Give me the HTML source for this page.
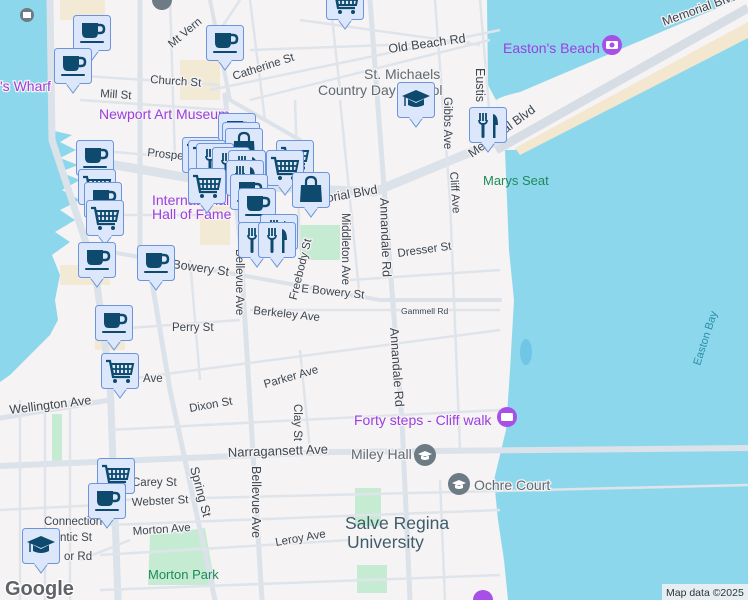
<!DOCTYPE html>
<html><head><meta charset="utf-8"><style>
html,body{margin:0;padding:0;width:748px;height:600px;overflow:hidden;background:#f5f3f4}
svg{display:block}
text{font-family:"Liberation Sans",sans-serif}
.s{font-size:11.5px;fill:#3c4650;stroke:#f5f3f4;stroke-width:2.5px;paint-order:stroke}
.p{font-size:14px;fill:#9a3fe0;stroke:#f5f3f4;stroke-width:2.5px;paint-order:stroke}
.g{font-size:14px;fill:#5f6a73;stroke:#f5f3f4;stroke-width:2.5px;paint-order:stroke}
</style></head><body>
<svg width="748" height="600" viewBox="0 0 748 600" xmlns="http://www.w3.org/2000/svg">
<defs>
<g id="box"><rect x="0.5" y="0.5" width="37" height="35" rx="3" fill="#dde7fb" stroke="#6b94da"/><path d="M12 35.5 L19 45 L26 35.5" fill="#dde7fb" stroke="#6b94da"/><rect x="12.5" y="34" width="13" height="3" fill="#dde7fb"/></g>
<g id="cup"><use href="#box"/><path d="M9 8 H25 V18 Q25 23 20 23 H14 Q9 23 9 18 Z" fill="#0d4a6e"/><path d="M25 10 H27 Q31 10 31 14 Q31 18 27 18 H25" fill="none" stroke="#0d4a6e" stroke-width="2.5"/><rect x="7" y="26" width="24" height="2" rx="1" fill="#0d4a6e"/></g>
<g id="cart"><use href="#box"/><path d="M5 8 H9 L12 24 H29" fill="none" stroke="#0d4a6e" stroke-width="2.2"/><path d="M10 11 H32 L30 21 H12 Z" fill="none" stroke="#0d4a6e" stroke-width="2"/><path d="M15 11V21M19 11V21M23 11V21M27 11V21M11 16H31" stroke="#0d4a6e" stroke-width="1.8"/><circle cx="14" cy="28" r="2" fill="#0d4a6e"/><circle cx="27" cy="28" r="2" fill="#0d4a6e"/></g>
<g id="bag"><use href="#box"/><path d="M9 13 H29 L30 30 H8 Z" fill="#0d4a6e"/><path d="M14 14 V10 Q14 5 19 5 Q24 5 24 10 V14" fill="none" stroke="#0d4a6e" stroke-width="2.2"/></g>
<g id="fork"><use href="#box"/><path d="M11 6V14M14 6V14M17 6V14M10 13Q10 17 14 17Q18 17 18 13" fill="none" stroke="#0d4a6e" stroke-width="1.8"/><rect x="12.5" y="16" width="3" height="15" rx="1.2" fill="#0d4a6e"/><path d="M24 31V7Q29 8 29 18H26.5V31Z" fill="#0d4a6e"/></g>
<g id="grad"><use href="#box"/><path d="M5 14 L19 8 L33 14 L19 20 Z" fill="#0d4a6e"/><path d="M11 17V23Q19 27 27 23V17L19 21Z" fill="#0d4a6e"/><path d="M8 15V24" stroke="#0d4a6e" stroke-width="1.5"/></g>
</defs>

<path d="M0 0 H50 V130 L72 135 L60 142 L76 150 L60 158 L78 165 L60 172 L80 180 L62 190 L80 200 L60 210 L75 220 L55 232 L70 242 L52 255 L60 275 L55 300 L58 320 L50 335 L30 355 L10 375 L0 382 Z" fill="#8dd7ec"/>
<path d="M487 0 H748 V600 H508 L504 560 L498 520 L494 480 L506 430 L510 370 L514 300 L509 250 L505 150 L496 100 L488 85 Z" fill="#8dd7ec"/>
<path d="M496 100 Q502 96 520 92 L748 -5 V35 L515 150 L505 150 Z" fill="#f5f3f4"/>
<path d="M515 148 L748 22 V38 L520 155 Z" fill="#f3e7cf"/>
<path d="M496 150 L748 8" stroke="#d6dde4" stroke-width="9"/>
<ellipse cx="526" cy="352" rx="6" ry="13" fill="#6fc6e6"/>

<g fill="#c5ecd3">
<rect x="300" y="225" width="40" height="35"/>
<rect x="355" y="488" width="26" height="38"/>
<rect x="357" y="565" width="30" height="28"/>
<polygon points="150,535 205,528 215,585 148,585"/>
<rect x="52" y="414" width="10" height="48"/>
</g>
<g fill="#f3ead6">
<rect x="60" y="0" width="45" height="20"/><rect x="180" y="60" width="40" height="40"/><rect x="200" y="205" width="30" height="40"/><rect x="60" y="265" width="50" height="20"/><rect x="95" y="330" width="30" height="20"/>
</g>

<g fill="none" stroke="#dce2e9" stroke-linecap="round">
<path d="M115 165 L230 185 L374 192 L500 140" stroke-width="9"/>
<path d="M50 0 L52 140 L95 270 L110 380 L118 600" stroke-width="7"/>
<path d="M0 466 L330 452 L748 448" stroke-width="6"/>
<path d="M225 95 L240 240 L262 600" stroke-width="5"/>
<path d="M150 270 L170 390 L215 600" stroke-width="5"/>
<path d="M370 0 L385 200 L395 330 L402 420 L410 600" stroke-width="5"/>
<path d="M0 418 L110 400" stroke-width="5"/>
<path d="M140 0 L140 260" stroke-width="5"/>
<path d="M100 250 L380 300 L500 300" stroke-width="4"/>
<path d="M210 0 L230 100 L300 140" stroke-width="4"/>
</g>
<g fill="none" stroke="#dfe4ea" stroke-width="2.5">
<path d="M70 75 L220 85 M80 100 L225 110 M90 150 L210 160 M100 215 L200 215 M210 90 L500 30 M250 100 L490 40 M300 20 L480 45 M250 50 L470 42 M350 280 L500 270 M250 310 L500 310 M100 330 L240 320 M120 380 L500 330 M110 430 L300 420 L500 410 M0 510 L100 505 M120 500 L748 485 M110 525 L500 510 M100 555 L350 540 M100 590 L500 575 M20 400 L20 600 M45 410 L45 600 M70 400 L70 600 M295 100 L300 250 M340 100 L360 300 M435 0 L450 200 L460 450 M300 350 L310 450 M480 0 L490 120 M170 0 L175 160 M250 0 L265 120 M330 0 L340 90 M190 260 L200 380 M440 480 L445 600 M240 0 L220 30 M80 560 L130 540"/>
</g>

<text class="s" x="161" y="42" transform="rotate(-40 175 30)">Mt Vern</text>
<text class="s" x="150" y="83" transform="rotate(4 150 83)">Church St</text>
<text class="s" x="234" y="80" transform="rotate(-18 234 80)">Catherine St</text>
<text class="s" x="100" y="97" transform="rotate(4 100 97)">Mill St</text>
<text class="s" x="147" y="156" transform="rotate(6 147 156)">Prospe</text>
<text class="s" x="389" y="53" style="font-size:12.5px" transform="rotate(-8 389 53)">Old Beach Rd</text>
<text class="g" x="364" y="79">St. Michaels</text>
<text class="g" x="318" y="95">Country Day School</text>
<text class="p" x="99" y="119">Newport Art Museum</text>
<text class="p" x="0" y="91">'s Wharf</text>
<text class="p" x="152" y="205">International</text>
<text class="p" x="152" y="219">Hall of Fame</text>
<text class="s" x="300" y="207" style="font-size:12.5px" transform="rotate(-10 300 207)">Memorial Blvd</text>
<text class="s" x="172" y="268" style="font-size:12.5px" transform="rotate(8 172 268)">Bowery St</text>
<text class="s" x="301" y="292" transform="rotate(6 301 292)">E Bowery St</text>
<text class="s" x="253" y="314" transform="rotate(6 253 314)">Berkeley Ave</text>
<text class="s" x="172" y="331">Perry St</text>
<text class="s" x="143" y="382">Ave</text>
<text class="s" x="265" y="388" transform="rotate(-16 265 388)">Parker Ave</text>
<text class="s" x="190" y="412" transform="rotate(-10 190 412)">Dixon St</text>
<text class="s" x="10" y="414" style="font-size:12.5px" transform="rotate(-7 10 414)">Wellington Ave</text>
<text class="s" x="228" y="457" style="font-size:13px" transform="rotate(-2 228 457)">Narragansett Ave</text>
<text class="s" x="132" y="486">Carey St</text>
<text class="s" x="132" y="506" transform="rotate(-3 132 506)">Webster St</text>
<text class="s" x="44" y="525">Connection</text>
<text class="s" x="133" y="535" transform="rotate(-4 133 535)">Morton Ave</text>
<text class="s" x="60" y="541">ntic St</text>
<text class="s" x="64" y="560">or Rd</text>
<text class="s" x="276" y="546" transform="rotate(-10 276 546)">Leroy Ave</text>
<text class="s" x="220" y="265" transform="rotate(90 236 265)">Bellevue Ave</text>
<text class="s" x="250" y="468" style="font-size:12.5px" transform="rotate(90 252 468)">Bellevue Ave</text>
<text class="s" x="190" y="468" style="font-size:12.5px" transform="rotate(75 190 468)">Spring St</text>
<text class="s" x="285" y="286" transform="rotate(-76 300 286)">Freebody St</text>
<text class="s" x="340" y="215" transform="rotate(90 342 215)">Middleton Ave</text>
<text class="s" x="294" y="404" transform="rotate(90 294 404)">Clay St</text>
<text class="s" x="380" y="198" style="font-size:12.5px" transform="rotate(88 380 198)">Annandale Rd</text>
<text class="s" x="390" y="328" style="font-size:12.5px" transform="rotate(86 390 328)">Annandale Rd</text>
<text class="s" x="444" y="97" transform="rotate(90 444 97)">Gibbs Ave</text>
<text class="s" x="450" y="172" transform="rotate(86 450 172)">Cliff Ave</text>
<text class="s" x="474" y="70" style="font-size:12.5px" transform="rotate(90 476 70)">Eustis</text>
<text class="s" x="398" y="257" transform="rotate(-8 398 257)">Dresser St</text>
<text class="s" x="401" y="314" style="font-size:8.5px">Gammell Rd</text>
<text class="s" x="472" y="158" style="font-size:12.5px" transform="rotate(-36 472 158)">Memorial Blvd</text>
<text class="s" x="664" y="26" style="font-size:12.5px" transform="rotate(-20 664 26)">Memorial Blvd</text>
<text x="503" y="53" style="font-size:14px;fill:#9a3fe0">Easton's Beach</text>
<circle cx="612" cy="45" r="10" fill="#a650e8"/><rect x="606" y="41" width="12" height="8" rx="1.5" fill="#fff"/><circle cx="612" cy="45" r="2.5" fill="#a650e8"/>
<text x="483" y="185" style="font-size:13px;fill:#1e8a5a">Marys Seat</text>
<text class="p" x="354" y="425">Forty steps - Cliff walk</text>
<circle cx="507" cy="417" r="10" fill="#a650e8"/><rect x="501" y="413" width="12" height="8" rx="1.5" fill="#fff"/>
<text class="g" x="351" y="459" style="fill:#606b73">Miley Hall</text>
<circle cx="425" cy="455" r="11" fill="#6d7b85"/><path d="M418 454 L425 451 L432 454 L425 457 Z M421 456 V459 Q425 461 429 459 V456" fill="#fff"/>
<text class="g" x="474" y="490" style="fill:#606b73">Ochre Court</text>
<circle cx="459" cy="484" r="11" fill="#6d7b85"/><path d="M452 483 L459 480 L466 483 L459 486 Z M455 485 V488 Q459 490 463 488 V485" fill="#fff"/>
<text x="345" y="529" style="font-size:17.5px;fill:#3f5c6a">Salve Regina</text>
<text x="347" y="548" style="font-size:17.5px;fill:#3f5c6a">University</text>
<text x="148" y="579" style="font-size:13px;fill:#1e8a5a">Morton Park</text>
<text x="700" y="366" style="font-size:11px;fill:#2a8fa6" transform="rotate(-72 700 366)">Easton Bay</text>
<circle cx="27" cy="15" r="7" fill="#6d7b85"/><rect x="23" y="12" width="8" height="6" fill="#fff"/>
<circle cx="162" cy="0" r="10" fill="#6d7b85"/>
<circle cx="483" cy="600" r="10" fill="#a650e8"/>
<text x="5" y="595" style="font-size:20px;font-weight:bold;fill:#5f6368;stroke:#fff;stroke-width:2.5px;paint-order:stroke">Google</text>
<rect x="662" y="584" width="86" height="16" fill="#f5f3f4" opacity="0.85"/>
<text x="666" y="596" style="font-size:10.5px;fill:#333">Map data ©2025</text>

<use href="#cart" x="326" y="-16"/>
<use href="#cup" x="73" y="15"/>
<use href="#cup" x="54" y="48"/>
<use href="#cup" x="206" y="25"/>
<use href="#grad" x="397" y="82"/>
<use href="#fork" x="469" y="107"/>
<use href="#cup" x="218" y="113"/>
<use href="#cup" x="222" y="122"/>
<use href="#bag" x="225" y="128"/>
<use href="#cart" x="182" y="137"/>
<use href="#cart" x="188" y="140"/>
<use href="#fork" x="196" y="143"/>
<use href="#fork" x="212" y="147"/>
<use href="#fork" x="228" y="150"/>
<use href="#cart" x="276" y="140"/>
<use href="#cart" x="266" y="150"/>
<use href="#fork" x="226" y="160"/>
<use href="#cup" x="230" y="174"/>
<use href="#cart" x="188" y="168"/>
<use href="#bag" x="292" y="172"/>
<use href="#cup" x="238" y="188"/>
<use href="#fork" x="260" y="214"/>
<use href="#fork" x="238" y="222"/>
<use href="#fork" x="258" y="222"/>
<use href="#cup" x="76" y="140"/>
<use href="#cart" x="78" y="169"/>
<use href="#cup" x="84" y="182"/>
<use href="#cart" x="86" y="200"/>
<use href="#cup" x="78" y="242"/>
<use href="#cup" x="137" y="245"/>
<use href="#cup" x="95" y="305"/>
<use href="#cart" x="101" y="353"/>
<use href="#cart" x="97" y="458"/>
<use href="#cup" x="88" y="483"/>
<use href="#grad" x="22" y="528"/>
</svg>
</body></html>
